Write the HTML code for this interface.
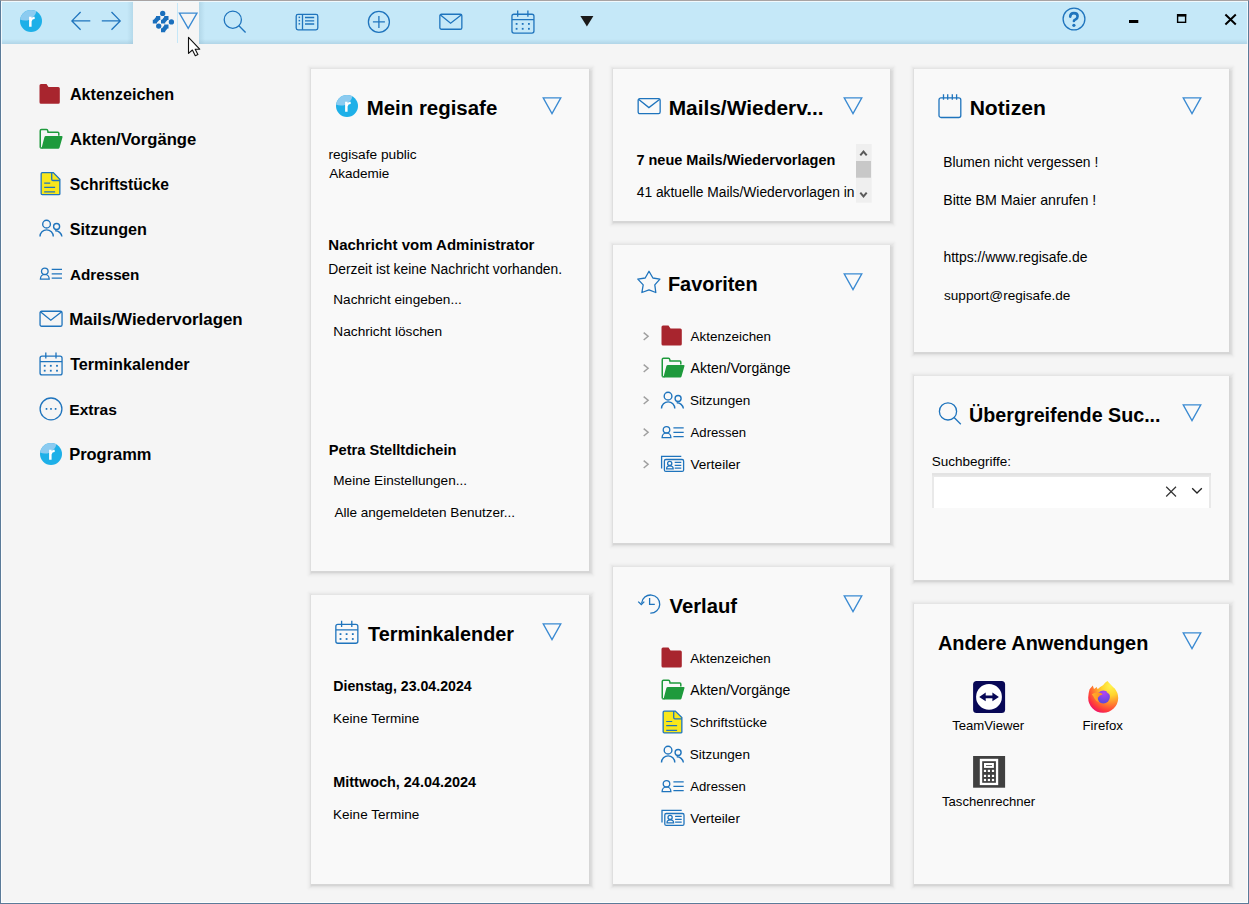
<!DOCTYPE html>
<html><head><meta charset="utf-8"><title>regisafe</title>
<style>
html,body{margin:0;padding:0}
body{width:1249px;height:904px;overflow:hidden;position:relative;background:#f5f5f5;font-family:"Liberation Sans",sans-serif;color:#000}
#tb{position:absolute;left:0;top:0;width:1249px;height:44px;background:linear-gradient(#c5e8f8 0,#c5e8f8 39px,#b1d5e7 44px)}
#tab{position:absolute;left:133px;top:2px;width:66px;height:42px;background:#f5f5f5}
.card{position:absolute;background:#f9f9f9;box-shadow:0.5px 1px 0 1px rgba(0,0,0,0.035),0.5px 1px 1px 2px rgba(0,0,0,0.03),0.5px 1px 1px 3px rgba(0,0,0,0.025),0.5px 1px 2px 4px rgba(0,0,0,0.02),0.5px 1px 2px 5px rgba(0,0,0,0.014)}
.t{position:absolute;white-space:nowrap;line-height:1}
#ov{position:absolute;left:0;top:0}
#bd{position:absolute;left:0;top:0;width:1249px;height:904px;box-sizing:border-box;border:1px solid #5b7b99;border-top-color:#a8a3a3;box-shadow:inset 0 0 0 1px rgba(255,255,255,0.75);pointer-events:none}
</style></head><body>
<div id="tb"></div><div style="position:absolute;left:127px;top:1px;width:6px;height:43px;background:linear-gradient(90deg,rgba(150,190,210,0),rgba(150,190,210,0.35))"></div><div style="position:absolute;left:199px;top:1px;width:6px;height:43px;background:linear-gradient(270deg,rgba(150,190,210,0),rgba(150,190,210,0.4))"></div><div id="tab"></div>
<div class="card" style="left:311px;top:69px;width:278px;height:502px"></div>
<div class="card" style="left:311px;top:595px;width:278px;height:289px"></div>
<div class="card" style="left:613px;top:69px;width:277px;height:152px"></div>
<div class="card" style="left:613px;top:245px;width:277px;height:298px"></div>
<div class="card" style="left:613px;top:567px;width:277px;height:317px"></div>
<div class="card" style="left:914px;top:69px;width:315px;height:283px"></div>
<div class="card" style="left:914px;top:376px;width:315px;height:204px"></div>
<div class="card" style="left:914px;top:604px;width:315px;height:280px"></div>
<svg id="ov" width="1249" height="904" viewBox="0 0 1249 904">
<g><clipPath id="rc31"><circle cx="31" cy="21" r="11"/></clipPath>
<circle cx="31" cy="21" r="11" fill="#1eb0e8"/>
<circle cx="25" cy="9" r="11.6" fill="#8ccbf0" clip-path="url(#rc31)"/>
<path d="M29.10,26.70 V16.80 H31.60 V18.30 Q32.50,16.60 34.70,16.70 V19.10 Q32.20,19.00 31.60,21.40 V26.70 Z" fill="#fff"/>
</g>
<path d="M80.6,12 L71.9,20.9 L80.6,29.7 M72,20.9 H90.3" fill="none" stroke="#1f74bd" stroke-width="1.3"/>
<path d="M111.5,12 L120.2,20.9 L111.5,29.7 M120.1,20.9 H101.8" fill="none" stroke="#1f74bd" stroke-width="1.3"/>
<g fill="#1a6fbd"><circle cx="162.7" cy="13.4" r="2.65"/><circle cx="171.4" cy="21.9" r="2.65"/><circle cx="158.7" cy="26.1" r="2.65"/>
<path d="M156.0,16.0 L160.3,16.0 L160.3,19.9 L159.3,19.9 L157.0,22.6 L157.0,23.6 L152.8,23.6 L152.8,19.7 L153.8,19.7 L156.0,17.0Z"/>
<path d="M164.2,16.0 L168.5,16.0 L168.5,19.9 L167.5,19.9 L165.2,22.6 L165.2,23.6 L161.0,23.6 L161.0,19.7 L162.0,19.7 L164.2,17.0Z"/>
<path d="M164.2,24.6 L168.5,24.6 L168.5,28.5 L167.5,28.5 L165.2,31.2 L165.2,32.2 L161.0,32.2 L161.0,28.3 L162.0,28.3 L164.2,25.6Z"/>
</g>
<path d="M177.5,3 V43" stroke="#c5e7f8" stroke-width="1"/>
<path d="M179.4,13.1 L197,13.1 L188.2,28.4 Z" fill="none" stroke="#3a8ad2" stroke-width="1.3"/>
<g transform="translate(223.4,10.5) scale(1)" fill="none" stroke="#1f74bd" stroke-width="1.3"><circle cx="9.4" cy="9.2" r="8.6"/><path d="M15.5,15.3 L22.2,22"/></g>
<g fill="none" stroke="#1f74bd" stroke-width="1.3"><rect x="296.2" y="14.4" width="21.6" height="15.4" rx="1.8"/><path d="M302.5,14.4 V29.8 M305,17.5 H314.2 M305,20.8 H314.2 M305,24 H314.2"/></g>
<g fill="#1f74bd"><rect x="298.6" y="16.6" width="1.5" height="1.5"/><rect x="298.6" y="19.9" width="1.5" height="1.5"/><rect x="298.6" y="23.1" width="1.5" height="1.5"/></g>
<g fill="none" stroke="#1f74bd" stroke-width="1.3"><circle cx="378.9" cy="21.9" r="10.5"/><path d="M372.9,21.9 H384.9 M378.9,15.9 V27.9"/></g>
<g transform="translate(439.2,13.6)" fill="none" stroke="#1f74bd" stroke-width="1.3"><rect x="0.65" y="0.65" width="22" height="15" rx="1.6"/><path d="M1,1.2 L11.4,9.6 L22.3,1.2"/></g>
<g transform="translate(511.3,10.6)" fill="none" stroke="#1f74bd" stroke-width="1.3"><rect x="0.65" y="3.65" width="22" height="18.8" rx="2"/><path d="M0.65,9.1 H22.65 M6.4,0 V6.1 M16.6,0 V6.1"/></g>
<rect x="515.7" y="23.0" width="1.8" height="1.8" fill="#1f74bd"/>
<rect x="515.7" y="27.9" width="1.8" height="1.8" fill="#1f74bd"/>
<rect x="521.8" y="23.0" width="1.8" height="1.8" fill="#1f74bd"/>
<rect x="521.8" y="27.9" width="1.8" height="1.8" fill="#1f74bd"/>
<rect x="528.0" y="23.0" width="1.8" height="1.8" fill="#1f74bd"/>
<rect x="528.0" y="27.9" width="1.8" height="1.8" fill="#1f74bd"/>
<path d="M580.4,16 H593.4 L586.9,26.5 Z" fill="#1a1a1a"/>
<circle cx="1074" cy="19" r="10.9" fill="none" stroke="#1f74bd" stroke-width="1.3"/>
<path d="M1070.2,16.6 Q1070.3,13.1 1073.9,13.1 Q1077.6,13.1 1077.6,16.2 Q1077.6,18.2 1075.6,19.4 Q1073.9,20.3 1073.9,21.0" fill="none" stroke="#1f74bd" stroke-width="2.6" stroke-linecap="round"/><circle cx="1073.9" cy="25.3" r="1.6" fill="#1f74bd"/>
<rect x="1129" y="20" width="9.3" height="3" fill="#000"/>
<rect x="1177.6" y="14.7" width="8" height="7.6" fill="none" stroke="#000" stroke-width="1.4"/><rect x="1177" y="14" width="9.2" height="2.6" fill="#000"/>
<path d="M1225.4,14.6 L1235.8,24.4 M1235.8,14.6 L1225.4,24.4" stroke="#000" stroke-width="2"/>
<path d="M188.5,37.3 V53.4 L192.4,50 L195.3,55.7 L197.9,54.6 L195.2,49.3 L199.7,49.2 Z" fill="#fff" stroke="#111" stroke-width="1.1" stroke-linejoin="round"/>
<path transform="translate(39.5,84)" d="M0,1.5 Q0,0 1.5,0 H7 L9,3 H18.8 Q20.3,3 20.3,4.5 V18.3 Q20.3,19.8 18.8,19.8 H1.5 Q0,19.8 0,18.3 Z" fill="#a8252e"/>
<g transform="translate(39.5,128.8)"><path d="M0.75,18.9 V2 Q0.75,0.75 2,0.75 H7.0 Q8.1,0.75 8.3,2 L8.5,3.5 H18.3 Q19.3,3.5 19.3,4.5 V7" fill="none" stroke="#1e9a3c" stroke-width="1.5"/>
<path d="M6.4,7.3 H22.1 Q23.3,7.3 23.0,8.5 L20.0,19.0 Q19.7,19.9 18.7,19.9 H2.4 Q1.9,19.9 2.1,19.2 L4.9,8.5 Q5.2,7.3 6.4,7.3 Z" fill="#1e9a3c"/><path d="M0.75,19.2 H3" stroke="#1e9a3c" stroke-width="1.4"/></g>
<g transform="translate(40.5,172)"><path d="M0.65,1.8 Q0.65,0.65 1.8,0.65 H12.8 L19.35,7.2 V21.9 Q19.35,22.55 18.2,22.55 H1.8 Q0.65,22.55 0.65,21.4 Z" fill="#f8e71c" stroke="#1f74bd" stroke-width="1.3"/>
<path d="M11.2,0.65 V7.2 Q11.2,8.5 12.5,8.5 H19.35" fill="none" stroke="#1f74bd" stroke-width="1.3"/>
<path d="M3.7,11.1 H9.7 M3.7,15.3 H14.6 M3.7,19.9 H14.6" stroke="#1f74bd" stroke-width="1.2"/></g>
<g transform="translate(40,219.6) scale(1)" fill="none" stroke="#1f74bd" stroke-width="1.4">
<circle cx="6.55" cy="4.55" r="3.85"/><path d="M0,16.9 A6.65,6.65 0 0 1 13.3,16.9"/>
<circle cx="16.6" cy="6.9" r="3"/><path d="M15.2,11.2 A6.6,6.6 0 0 1 21.9,16.9"/></g>
<g transform="translate(39.8,268.8) scale(1)" fill="none" stroke="#1f74bd" stroke-width="1.3">
<circle cx="5" cy="2.6" r="3.3"/><path d="M0.6,10.4 A4.4,4.8 0 0 1 9.4,10.4 Z"/>
<path d="M11.9,0.6 H22.2 M11.9,5.1 H22.2 M11.9,9.4 H22.2"/></g>
<g transform="translate(39.4,310.6)" fill="none" stroke="#1f74bd" stroke-width="1.3"><rect x="0.65" y="0.65" width="22" height="15" rx="1.6"/><path d="M1,1.2 L11.4,9.6 L22.3,1.2"/></g>
<g transform="translate(39.4,352.5)" fill="none" stroke="#1f74bd" stroke-width="1.3"><rect x="0.65" y="3.65" width="22" height="18.8" rx="2"/><path d="M0.65,9.1 H22.65 M6.4,0 V6.1 M16.6,0 V6.1"/></g>
<rect x="43.8" y="364.9" width="1.8" height="1.8" fill="#1f74bd"/>
<rect x="43.8" y="369.8" width="1.8" height="1.8" fill="#1f74bd"/>
<rect x="49.9" y="364.9" width="1.8" height="1.8" fill="#1f74bd"/>
<rect x="49.9" y="369.8" width="1.8" height="1.8" fill="#1f74bd"/>
<rect x="56.1" y="364.9" width="1.8" height="1.8" fill="#1f74bd"/>
<rect x="56.1" y="369.8" width="1.8" height="1.8" fill="#1f74bd"/>
<circle cx="51" cy="408.9" r="10.9" fill="none" stroke="#1f74bd" stroke-width="1.3"/>
<rect x="45.7" y="408.0" width="1.6" height="1.8" fill="#1f74bd"/>
<rect x="50.2" y="408.0" width="1.6" height="1.8" fill="#1f74bd"/>
<rect x="54.8" y="408.0" width="1.6" height="1.8" fill="#1f74bd"/>
<g><clipPath id="rc51"><circle cx="51" cy="454" r="11"/></clipPath>
<circle cx="51" cy="454" r="11" fill="#1eb0e8"/>
<circle cx="45" cy="442" r="11.6" fill="#8ccbf0" clip-path="url(#rc51)"/>
<path d="M49.10,459.70 V449.80 H51.60 V451.30 Q52.50,449.60 54.70,449.70 V452.10 Q52.20,452.00 51.60,454.40 V459.70 Z" fill="#fff"/>
</g>
<g><clipPath id="rc347"><circle cx="347" cy="106" r="11"/></clipPath>
<circle cx="347" cy="106" r="11" fill="#1eb0e8"/>
<circle cx="341" cy="94" r="11.6" fill="#8ccbf0" clip-path="url(#rc347)"/>
<path d="M345.10,111.70 V101.80 H347.60 V103.30 Q348.50,101.60 350.70,101.70 V104.10 Q348.20,104.00 347.60,106.40 V111.70 Z" fill="#fff"/>
</g>
<g transform="translate(335.2,620.8)" fill="none" stroke="#1f74bd" stroke-width="1.3"><rect x="0.65" y="3.65" width="22" height="18.8" rx="2"/><path d="M0.65,9.1 H22.65 M6.4,0 V6.1 M16.6,0 V6.1"/></g>
<rect x="339.6" y="633.2" width="1.8" height="1.8" fill="#1f74bd"/>
<rect x="339.6" y="638.1" width="1.8" height="1.8" fill="#1f74bd"/>
<rect x="345.7" y="633.2" width="1.8" height="1.8" fill="#1f74bd"/>
<rect x="345.7" y="638.1" width="1.8" height="1.8" fill="#1f74bd"/>
<rect x="351.9" y="633.2" width="1.8" height="1.8" fill="#1f74bd"/>
<rect x="351.9" y="638.1" width="1.8" height="1.8" fill="#1f74bd"/>
<g transform="translate(637.5,98)" fill="none" stroke="#1f74bd" stroke-width="1.3"><rect x="0.65" y="0.65" width="22" height="15" rx="1.6"/><path d="M1,1.2 L11.4,9.6 L22.3,1.2"/></g>
<path d="M649.0,271.2 L652.9,278.0 L659.9,279.1 L654.8,284.9 L655.8,292.5 L649.0,289.8 L641.9,292.5 L643.2,284.9 L637.8,279.1 L645.2,278.0Z" fill="none" stroke="#1f74bd" stroke-width="1.3" stroke-linejoin="round"/>
<g transform="translate(0,0)" fill="none" stroke="#1f74bd" stroke-width="1.3">
<path d="M650.3,613.2 A9.1,9.1 0 1 0 641.6,603.2"/><path d="M638.2,601.6 L641.3,604.5 L644.3,601.6"/><path d="M649.6,598 V604.4 H654.8"/></g>
<g transform="translate(938.3,94.2)" fill="none" stroke="#1f74bd" stroke-width="1.3"><rect x="0.7" y="3.7" width="21.8" height="19.6" rx="2"/><path d="M5.2,0 V5.5 M9.4,0 V5.5 M14,0 V5.5 M18.3,0 V5.5"/></g>
<g transform="translate(938.6,402.2) scale(1)" fill="none" stroke="#1f74bd" stroke-width="1.3"><circle cx="9.4" cy="9.2" r="8.6"/><path d="M15.5,15.3 L22.2,22"/></g>
<path d="M543.2,97.9 L560.8,97.9 L552.0,113.6 Z" fill="none" stroke="#3a8ad2" stroke-width="1.3" stroke-linejoin="miter"/>
<path d="M543.2,623.9 L560.8,623.9 L552.0,639.6 Z" fill="none" stroke="#3a8ad2" stroke-width="1.3" stroke-linejoin="miter"/>
<path d="M844.2,97.9 L861.8,97.9 L853.0,113.6 Z" fill="none" stroke="#3a8ad2" stroke-width="1.3" stroke-linejoin="miter"/>
<path d="M844.2,273.9 L861.8,273.9 L853.0,289.6 Z" fill="none" stroke="#3a8ad2" stroke-width="1.3" stroke-linejoin="miter"/>
<path d="M844.2,595.9 L861.8,595.9 L853.0,611.6 Z" fill="none" stroke="#3a8ad2" stroke-width="1.3" stroke-linejoin="miter"/>
<path d="M1183.2,97.9 L1200.8,97.9 L1192.0,113.6 Z" fill="none" stroke="#3a8ad2" stroke-width="1.3" stroke-linejoin="miter"/>
<path d="M1183.2,404.9 L1200.8,404.9 L1192.0,420.6 Z" fill="none" stroke="#3a8ad2" stroke-width="1.3" stroke-linejoin="miter"/>
<path d="M1183.2,632.9 L1200.8,632.9 L1192.0,648.6 Z" fill="none" stroke="#3a8ad2" stroke-width="1.3" stroke-linejoin="miter"/>
<path d="M643.7,332.6 L648.1,336.3 L643.7,340.0" fill="none" stroke="#a0a0a0" stroke-width="1.5"/>
<path transform="translate(661.5,325.6)" d="M0,1.5 Q0,0 1.5,0 H7 L9,3 H18.8 Q20.3,3 20.3,4.5 V18.3 Q20.3,19.8 18.8,19.8 H1.5 Q0,19.8 0,18.3 Z" fill="#a8252e"/>
<path d="M643.7,364.6 L648.1,368.3 L643.7,372.0" fill="none" stroke="#a0a0a0" stroke-width="1.5"/>
<g transform="translate(661.5,357.6)"><path d="M0.75,18.9 V2 Q0.75,0.75 2,0.75 H7.0 Q8.1,0.75 8.3,2 L8.5,3.5 H18.3 Q19.3,3.5 19.3,4.5 V7" fill="none" stroke="#1e9a3c" stroke-width="1.5"/>
<path d="M6.4,7.3 H22.1 Q23.3,7.3 23.0,8.5 L20.0,19.0 Q19.7,19.9 18.7,19.9 H2.4 Q1.9,19.9 2.1,19.2 L4.9,8.5 Q5.2,7.3 6.4,7.3 Z" fill="#1e9a3c"/><path d="M0.75,19.2 H3" stroke="#1e9a3c" stroke-width="1.4"/></g>
<path d="M643.7,396.6 L648.1,400.3 L643.7,404.0" fill="none" stroke="#a0a0a0" stroke-width="1.5"/>
<g transform="translate(661.5,391.6) scale(1)" fill="none" stroke="#1f74bd" stroke-width="1.4">
<circle cx="6.55" cy="4.55" r="3.85"/><path d="M0,16.9 A6.65,6.65 0 0 1 13.3,16.9"/>
<circle cx="16.6" cy="6.9" r="3"/><path d="M15.2,11.2 A6.6,6.6 0 0 1 21.9,16.9"/></g>
<path d="M643.7,428.6 L648.1,432.3 L643.7,436.0" fill="none" stroke="#a0a0a0" stroke-width="1.5"/>
<g transform="translate(661.5,427.3) scale(1)" fill="none" stroke="#1f74bd" stroke-width="1.3">
<circle cx="5" cy="2.6" r="3.3"/><path d="M0.6,10.4 A4.4,4.8 0 0 1 9.4,10.4 Z"/>
<path d="M11.9,0.6 H22.2 M11.9,5.1 H22.2 M11.9,9.4 H22.2"/></g>
<path d="M643.7,460.6 L648.1,464.3 L643.7,468.0" fill="none" stroke="#a0a0a0" stroke-width="1.5"/>
<g transform="translate(-0.39999999999997726,0)" fill="none" stroke="#1f74bd" stroke-width="1.3">
<path d="M662,468.6 V456.3 H681.7"/><rect x="664.8" y="459.5" width="19.2" height="11.9" rx="1.5"/>
<circle cx="670.1" cy="463.4" r="2.1"/><path d="M667,468.9 A3.3,3 0 0 1 673.6,468.9 Z"/><path d="M675.1,462.4 H681.7 M675.1,465.3 H681.7 M675.1,468.1 H681.7"/></g>
<path transform="translate(661.5,647.6)" d="M0,1.5 Q0,0 1.5,0 H7 L9,3 H18.8 Q20.3,3 20.3,4.5 V18.3 Q20.3,19.8 18.8,19.8 H1.5 Q0,19.8 0,18.3 Z" fill="#a8252e"/>
<g transform="translate(661.5,679.6)"><path d="M0.75,18.9 V2 Q0.75,0.75 2,0.75 H7.0 Q8.1,0.75 8.3,2 L8.5,3.5 H18.3 Q19.3,3.5 19.3,4.5 V7" fill="none" stroke="#1e9a3c" stroke-width="1.5"/>
<path d="M6.4,7.3 H22.1 Q23.3,7.3 23.0,8.5 L20.0,19.0 Q19.7,19.9 18.7,19.9 H2.4 Q1.9,19.9 2.1,19.2 L4.9,8.5 Q5.2,7.3 6.4,7.3 Z" fill="#1e9a3c"/><path d="M0.75,19.2 H3" stroke="#1e9a3c" stroke-width="1.4"/></g>
<g transform="translate(662.5,710.4)"><path d="M0.65,1.8 Q0.65,0.65 1.8,0.65 H12.8 L19.35,7.2 V21.9 Q19.35,22.55 18.2,22.55 H1.8 Q0.65,22.55 0.65,21.4 Z" fill="#f8e71c" stroke="#1f74bd" stroke-width="1.3"/>
<path d="M11.2,0.65 V7.2 Q11.2,8.5 12.5,8.5 H19.35" fill="none" stroke="#1f74bd" stroke-width="1.3"/>
<path d="M3.7,11.1 H9.7 M3.7,15.3 H14.6 M3.7,19.9 H14.6" stroke="#1f74bd" stroke-width="1.2"/></g>
<g transform="translate(661.5,745.6) scale(1)" fill="none" stroke="#1f74bd" stroke-width="1.4">
<circle cx="6.55" cy="4.55" r="3.85"/><path d="M0,16.9 A6.65,6.65 0 0 1 13.3,16.9"/>
<circle cx="16.6" cy="6.9" r="3"/><path d="M15.2,11.2 A6.6,6.6 0 0 1 21.9,16.9"/></g>
<g transform="translate(661.5,781.3) scale(1)" fill="none" stroke="#1f74bd" stroke-width="1.3">
<circle cx="5" cy="2.6" r="3.3"/><path d="M0.6,10.4 A4.4,4.8 0 0 1 9.4,10.4 Z"/>
<path d="M11.9,0.6 H22.2 M11.9,5.1 H22.2 M11.9,9.4 H22.2"/></g>
<g transform="translate(0,354)" fill="none" stroke="#1f74bd" stroke-width="1.3">
<path d="M662,468.6 V456.3 H681.7"/><rect x="664.8" y="459.5" width="19.2" height="11.9" rx="1.5"/>
<circle cx="670.1" cy="463.4" r="2.1"/><path d="M667,468.9 A3.3,3 0 0 1 673.6,468.9 Z"/><path d="M675.1,462.4 H681.7 M675.1,465.3 H681.7 M675.1,468.1 H681.7"/></g>
<rect x="856" y="144" width="15.7" height="58.7" fill="#efefef"/><rect x="856" y="161" width="15" height="16.7" fill="#c8c8c8"/>
<path d="M860.3,155.3 L863.5,151.6 L866.7,155.3 M860.3,192.7 L863.5,196.4 L866.7,192.7" fill="none" stroke="#5a5a5a" stroke-width="2"/>
<rect x="932" y="473" width="279" height="35" fill="#e9e9e9"/><rect x="932" y="473" width="279" height="2.5" fill="#e3e3e3"/><rect x="934" y="477" width="275" height="31" fill="#fff"/>
<path d="M1166.2,486.8 L1176,496.5 M1176,486.8 L1166.2,496.5" stroke="#333" stroke-width="1.2"/>
<path d="M1192.2,488.3 L1197,493 L1201.8,488.3" fill="none" stroke="#222" stroke-width="1.3"/>
<rect x="973.1" y="680.9" width="32" height="32" rx="3.5" fill="#080856"/><circle cx="989" cy="696.9" r="12.9" fill="#fff"/>
<path d="M979.2,696.9 L985.7,692.6 V695.6 H992.4 V692.6 L998.9,696.9 L992.4,701.2 V698.2 H985.7 V701.2 Z" fill="#080856"/>
<defs><radialGradient id="ffo" cx="0.75" cy="0.15" r="1.0"><stop offset="0" stop-color="#fff44f"/><stop offset="0.3" stop-color="#ffd42e"/><stop offset="0.55" stop-color="#ff8a2e"/><stop offset="0.8" stop-color="#ff3b3b"/><stop offset="1" stop-color="#e8007a"/></radialGradient>
<radialGradient id="ffp" cx="0.55" cy="0.2" r="0.8"><stop offset="0" stop-color="#b044f5"/><stop offset="1" stop-color="#5a48dc"/></radialGradient>
<linearGradient id="ffh" x1="0" y1="0" x2="1" y2="0"><stop offset="0" stop-color="#ffb02e"/><stop offset="1" stop-color="#ff8a1e"/></linearGradient></defs>
<path d="M1089.6,689.2 L1092.8,685.6 L1094,689 L1096.8,687 L1097.6,689.3 Q1100,686.5 1103,685.2 Q1105,682.5 1107.4,681 Q1110.5,684.5 1113.5,687.5 L1114.3,688 Q1118.2,692.5 1118.2,698 A15,15 0 1 1 1088.2,697.5 Q1088.4,693 1089.6,689.2 Z" fill="url(#ffo)"/>
<circle cx="1103.4" cy="697" r="6.5" fill="url(#ffp)"/>
<path d="M1108.5,691.5 Q1111,692.5 1109.5,694 Q1108,692.5 1106.5,693 Z" fill="#ffcf3e"/>
<path d="M1091.8,694.2 Q1095,692 1099,692.6 Q1102,693 1102.7,694.6 Q1099.5,695.2 1097.8,697.8 Q1097.5,700.5 1099.5,702.6 Q1096,701.5 1094.5,698.5 Q1093.5,696 1091.8,694.2 Z" fill="url(#ffh)"/>
<rect x="973.1" y="756" width="32" height="31.7" fill="#404040"/><rect x="979.8" y="758.8" width="18.4" height="26.3" fill="#fff"/><rect x="982.2" y="761.2" width="13.7" height="21.6" fill="#404040"/>
<rect x="984" y="763" width="9.9" height="4.9" fill="#fff"/><rect x="986" y="765" width="6" height="0.8" fill="#404040"/>
<rect x="983.9" y="769.8" width="2.2" height="2.2" fill="#fff"/>
<rect x="983.9" y="774.8" width="2.2" height="2.2" fill="#fff"/>
<rect x="983.9" y="778.9" width="2.2" height="2.2" fill="#fff"/>
<rect x="987.8" y="769.8" width="2.2" height="2.2" fill="#fff"/>
<rect x="987.8" y="774.8" width="2.2" height="2.2" fill="#fff"/>
<rect x="987.8" y="778.9" width="2.2" height="2.2" fill="#fff"/>
<rect x="991.9" y="769.8" width="2.2" height="2.2" fill="#fff"/>
<rect x="991.9" y="774.8" width="2.2" height="2.2" fill="#fff"/>
<rect x="991.9" y="778.9" width="2.2" height="2.2" fill="#fff"/>
</svg>
<div class="t" style="left:69.89px;top:86px;font-size:16.20px;font-weight:bold;">Aktenzeichen</div>
<div class="t" style="left:69.88px;top:132px;font-size:16.65px;font-weight:bold;">Akten/Vorgänge</div>
<div class="t" style="left:69.83px;top:177px;font-size:15.65px;font-weight:bold;">Schriftstücke</div>
<div class="t" style="left:69.82px;top:221px;font-size:16.15px;font-weight:bold;">Sitzungen</div>
<div class="t" style="left:69.92px;top:267px;font-size:15.25px;font-weight:bold;">Adressen</div>
<div class="t" style="left:69.20px;top:312px;font-size:16.90px;font-weight:bold;">Mails/Wiedervorlagen</div>
<div class="t" style="left:70.14px;top:356px;font-size:16.20px;font-weight:bold;">Terminkalender</div>
<div class="t" style="left:69.29px;top:402px;font-size:15.55px;font-weight:bold;">Extras</div>
<div class="t" style="left:69.23px;top:446px;font-size:16.45px;font-weight:bold;">Programm</div>
<div class="t" style="left:366.67px;top:98px;font-size:20.45px;font-weight:bold;">Mein regisafe</div>
<div class="t" style="left:368.10px;top:625px;font-size:19.80px;font-weight:bold;">Terminkalender</div>
<div class="t" style="left:668.64px;top:98px;font-size:20.90px;font-weight:bold;">Mails/Wiederv...</div>
<div class="t" style="left:667.90px;top:275px;font-size:19.95px;font-weight:bold;">Favoriten</div>
<div class="t" style="left:669.50px;top:596px;font-size:20.25px;font-weight:bold;">Verlauf</div>
<div class="t" style="left:969.63px;top:97px;font-size:21.10px;font-weight:bold;">Notizen</div>
<div class="t" style="left:969.12px;top:406px;font-size:19.70px;font-weight:bold;">Übergreifende Suc...</div>
<div class="t" style="left:938.00px;top:634px;font-size:19.90px;font-weight:bold;">Andere Anwendungen</div>
<div class="t" style="left:328.41px;top:148px;font-size:13.70px;">regisafe public</div>
<div class="t" style="left:329.30px;top:167px;font-size:13.50px;">Akademie</div>
<div class="t" style="left:328.32px;top:237px;font-size:15.00px;font-weight:bold;">Nachricht vom Administrator</div>
<div class="t" style="left:328.19px;top:263px;font-size:13.85px;">Derzeit ist keine Nachricht vorhanden.</div>
<div class="t" style="left:333.31px;top:293px;font-size:13.60px;">Nachricht eingeben...</div>
<div class="t" style="left:333.30px;top:325px;font-size:13.70px;">Nachricht löschen</div>
<div class="t" style="left:328.75px;top:443px;font-size:14.65px;font-weight:bold;">Petra Stelltdichein</div>
<div class="t" style="left:333.31px;top:474px;font-size:13.60px;">Meine Einstellungen...</div>
<div class="t" style="left:334.40px;top:506px;font-size:13.55px;">Alle angemeldeten Benutzer...</div>
<div class="t" style="left:333.28px;top:679px;font-size:14.15px;font-weight:bold;">Dienstag, 23.04.2024</div>
<div class="t" style="left:333.12px;top:712px;font-size:13.50px;">Keine Termine</div>
<div class="t" style="left:333.26px;top:775px;font-size:14.45px;font-weight:bold;">Mittwoch, 24.04.2024</div>
<div class="t" style="left:333.12px;top:808px;font-size:13.50px;">Keine Termine</div>
<div class="t" style="left:636.42px;top:153px;font-size:14.50px;font-weight:bold;">7 neue Mails/Wiedervorlagen</div>
<div class="t" style="left:636.72px;top:186px;font-size:13.80px;">41 aktuelle Mails/Wiedervorlagen in</div>
<div class="t" style="left:690.60px;top:330px;font-size:13.40px;">Aktenzeichen</div>
<div class="t" style="left:690.60px;top:361px;font-size:14.05px;">Akten/Vorgänge</div>
<div class="t" style="left:689.99px;top:394px;font-size:13.55px;">Sitzungen</div>
<div class="t" style="left:690.60px;top:426px;font-size:13.15px;">Adressen</div>
<div class="t" style="left:690.53px;top:458px;font-size:13.55px;">Verteiler</div>
<div class="t" style="left:690.30px;top:652px;font-size:13.40px;">Aktenzeichen</div>
<div class="t" style="left:690.30px;top:683px;font-size:14.05px;">Akten/Vorgänge</div>
<div class="t" style="left:689.69px;top:716px;font-size:13.50px;">Schriftstücke</div>
<div class="t" style="left:689.69px;top:748px;font-size:13.55px;">Sitzungen</div>
<div class="t" style="left:690.30px;top:780px;font-size:13.15px;">Adressen</div>
<div class="t" style="left:690.23px;top:812px;font-size:13.55px;">Verteiler</div>
<div class="t" style="left:943.30px;top:156px;font-size:13.80px;">Blumen nicht vergessen !</div>
<div class="t" style="left:943.26px;top:193px;font-size:14.20px;">Bitte BM Maier anrufen !</div>
<div class="t" style="left:943.42px;top:251px;font-size:13.95px;">https://www.regisafe.de</div>
<div class="t" style="left:943.99px;top:289px;font-size:13.60px;">support@regisafe.de</div>
<div class="t" style="left:931.79px;top:455px;font-size:13.50px;">Suchbegriffe:</div>
<div class="t" style="left:952.14px;top:719px;font-size:13.15px;">TeamViewer</div>
<div class="t" style="left:1082.54px;top:719px;font-size:13.20px;">Firefox</div>
<div class="t" style="left:942.04px;top:795px;font-size:13.10px;">Taschenrechner</div>
<div id="bd"></div>
</body></html>
